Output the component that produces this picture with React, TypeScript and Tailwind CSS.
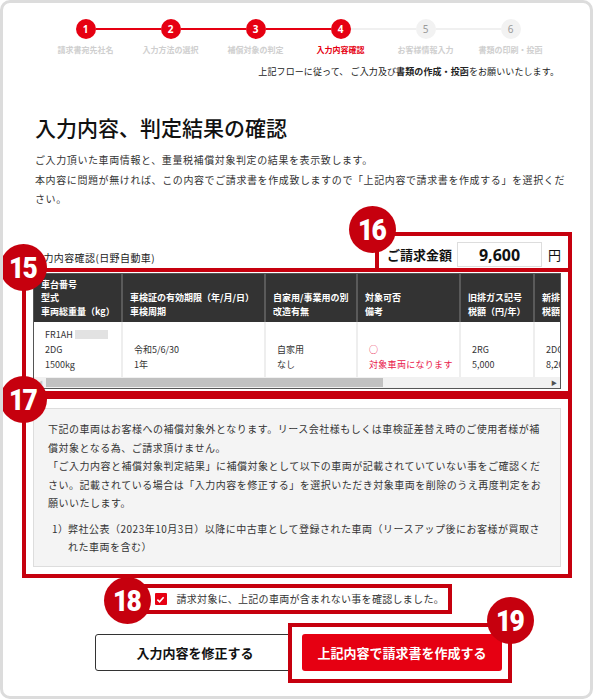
import React from "react";

function Badge({ n, pos }: { n: string; pos: string }) {
  return (
    <div
      className={
        "absolute z-20 w-[47px] h-[47px] rounded-full bg-[#c6000e] flex items-center justify-center " +
        pos
      }
    >
      <span className="text-white font-['Roboto',sans-serif] font-black text-[30px] leading-none tracking-[-2px] scale-x-[0.88] pr-[2px]">
        {n}
      </span>
    </div>
  );
}

const steps = [
  "請求書宛先社名",
  "入力方法の選択",
  "補償対象の判定",
  "入力内容確認",
  "お客様情報入力",
  "書類の印刷・投函",
];

type Col = { w: string; head: string[]; body: React.ReactNode[]; red?: boolean };

const cols: Col[] = [
  {
    w: "w-[89px]",
    head: ["車台番号", "型式", "車両総重量（kg）"],
    body: [
      <span className="flex items-center">
        FR1AH<span className="inline-block ml-[2px] w-[33px] h-[9px] bg-[#e2e2e2]" />
      </span>,
      "2DG",
      "1500kg",
    ],
  },
  { w: "w-[143px]", head: ["車検証の有効期限（年/月/日）", "車検周期"], body: ["令和5/6/30", "1年"] },
  { w: "w-[92px]", head: ["自家用/事業用の別", "改造有無"], body: ["自家用", "なし"] },
  { w: "w-[103px]", head: ["対象可否", "備考"], body: ["○", "対象車両になります"], red: true },
  { w: "w-[74px]", head: ["旧排ガス記号", "税額（円/年）"], body: ["2RG", "5,000"] },
  { w: "w-[100px]", head: ["新排ガス記号", "税額（円/年）"], body: ["2DG", "8,200"] },
];

export default function App() {
  return (
    <div className="w-[593px] h-[699px] bg-white border-[3px] border-[#dcdcdc] rounded-[10px] overflow-hidden font-['Noto_Sans_CJK_JP','Noto_Sans',sans-serif] text-[#333]">
      {/* steps */}
      <div className="pt-[16px] pl-[40px] flex">
        {steps.map((label, i) => (
          <div key={i} className="w-[85px] flex flex-col items-center">
            <div className="w-full flex items-center h-[20px]">
              <div
                className={
                  "flex-1 h-[2px] " +
                  (i === 0 ? "bg-transparent" : i <= 3 ? "bg-[#e60012]" : "bg-[#f0f0f0]")
                }
              />
              <div
                className={
                  "w-[20px] h-[20px] rounded-full flex items-center justify-center text-[10px] leading-none font-['Noto_Sans',sans-serif] " +
                  (i <= 3 ? "bg-[#e60012] text-white font-bold" : "bg-[#f2f2f2] text-[#9a9a9a]")
                }
              >
                {i + 1}
              </div>
              <div
                className={
                  "flex-1 h-[2px] " +
                  (i === 5 ? "bg-transparent" : i < 3 ? "bg-[#e60012]" : "bg-[#f0f0f0]")
                }
              />
            </div>
            <div
              className={
                "mt-[6px] text-[8px] leading-[10px] whitespace-nowrap font-bold " +
                (i === 3 ? "text-[#e60012]" : "text-[#cfcfcf]")
              }
            >
              {label}
            </div>
          </div>
        ))}
      </div>
      <p className="mt-[11px] pr-[31px] text-right text-[9px] leading-[12px] tracking-[0.1px] text-[#222]">
        上記フローに従って、 ご入力及び<b className="font-bold">書類の作成・投函</b>をお願いいたします。
      </p>

      <div className="pl-[32px] pr-[22px]">
        <h1 className="mt-[35px] text-[21px] leading-[28px] font-medium text-[#111]">
          入力内容、判定結果の確認
        </h1>
        <p className="mt-[9px] text-[10px] leading-[19.5px] tracking-[0.6px] text-[#333]">
          ご入力頂いた車両情報と、重量税補償対象判定の結果を表示致します。
          <br />
          本内容に問題が無ければ、この内容でご請求書を作成致しますので「上記内容で請求書を作成する」を選択くだ
          <br />
          さい。
        </p>
      </div>

      {/* annotated region */}
      <div className="ml-[19px] w-[550px] mt-[23.5px]">
        <div className="flex justify-between items-end">
          <div className="pl-[11px] pb-[3px] text-[10px] leading-[14px] tracking-[0.4px] text-[#222]">
            入力内容確認(日野自動車)
          </div>
          <div className="relative w-[197px] h-[36px] border-[4px] border-b-0 border-[#c6000e] flex items-center pt-[5px]">
            <Badge n="16" pos="left-[-30px] top-[-30px]" />
            <span className="pl-[8px] text-[13px] leading-[18px] font-bold text-[#111]">ご請求金額</span>
            <div className="ml-[5px] w-[85px] h-[25px] border border-[#dddddd] bg-white flex items-center justify-center font-['Noto_Sans',sans-serif] font-bold text-[16px] text-[#111]">
              9,600
            </div>
            <span className="ml-[6px] text-[13px] leading-[18px] text-[#111]">円</span>
          </div>
        </div>

        {/* box 15 */}
        <div className="relative border-[4px] border-[#c6000e] pt-[1px] pb-[2px] px-[7px]">
          <Badge n="15" pos="left-[-26px] top-[-28px]" />
          <div className="w-[528px] border border-[#555] overflow-hidden">
            <div className="flex w-[601px]">
              {cols.map((c, ci) => (
                <div key={ci} className={"flex flex-col shrink-0 " + c.w}>
                  <div className="h-[48px] bg-[#333333] border-r-[2px] border-[#5a5a5a] flex flex-col justify-end pl-[7px] pb-[4px]">
                    {c.head.map((h, hi) => (
                      <div key={hi} className="text-[9px] leading-[13.5px] font-bold text-white whitespace-nowrap">
                        {h}
                      </div>
                    ))}
                  </div>
                  <div className="h-[55px] bg-white border-r-[2px] border-[#eeeeee] flex flex-col justify-end pl-[11px] pb-[5px]">
                    {c.body.map((b, bi) => (
                      <div
                        key={bi}
                        className={
                          "text-[9px] leading-[15px] whitespace-nowrap " +
                          (c.red ? "text-[#e8174a] tracking-[0.3px]" : "text-[#333]")
                        }
                      >
                        {b}
                      </div>
                    ))}
                  </div>
                </div>
              ))}
            </div>
            <div className="h-[11px] bg-[#f1f1f1] flex items-center">
              <div className="w-[12px] h-full flex items-center justify-center text-[6px] text-[#c8c8c8] leading-none">◀</div>
              <div className="w-[337px] h-[9px] bg-[#c1c1c1]" />
              <div className="flex-1" />
              <div className="w-[12px] h-full flex items-center justify-center text-[6px] text-[#505050] leading-none">▶</div>
            </div>
          </div>
        </div>

        {/* box 17 */}
        <div className="relative border-[4px] border-[#c6000e] pt-[9px] pb-[7px] px-[7px]">
          <Badge n="17" pos="left-[-26px] top-[-23px]" />
          <div className="h-[159px] bg-[#f4f4f4] border border-[#dddddd] px-[14px] pt-[11px] text-[10px] leading-[18.5px] tracking-[0.5px] text-[#333]">
            <p>
              下記の車両はお客様への補償対象外となります。リース会社様もしくは車検証差替え時のご使用者様が補償対象となる為、ご請求頂けません。
              <br />
              「ご入力内容と補償対象判定結果」に補償対象として以下の車両が記載されていていない事をご確認ください。記載されている場合は「入力内容を修正する」を選択いただき対象車両を削除のうえ再度判定をお願いいたします。
            </p>
            <div className="mt-[7px] flex">
              <span className="w-[20px] shrink-0 pl-[4px]">1）</span>
              <span>
                弊社公表（2023年10月3日）以降に中古車として登録された車両（リースアップ後にお客様が買取さ
                <br />
                れた車両を含む）
              </span>
            </div>
          </div>
        </div>
      </div>

      {/* box 18 */}
      <div className="mt-[6px] flex justify-center">
        <div className="relative w-[310px] h-[30px] border-[4px] border-[#c6000e] flex items-center pl-[9px]">
          <Badge n="18" pos="left-[-42px] top-[-11px]" />
          <div className="w-[12px] h-[12px] bg-[#e60012] rounded-[1px] flex items-center justify-center shrink-0">
            <svg width="9" height="9" viewBox="0 0 10 10">
              <polyline points="1.5,5.2 4,7.5 8.5,2.5" fill="none" stroke="white" strokeWidth="1.8" />
            </svg>
          </div>
          <span className="ml-[10px] text-[10px] leading-[14px] tracking-[0.3px] text-[#333] whitespace-nowrap">
            請求対象に、上記の車両が含まれない事を確認しました。
          </span>
        </div>
      </div>

      {/* buttons */}
      <div className="mt-[20px] ml-[92px] flex gap-[7px]">
        <button className="w-[200px] h-[37px] border-[1.5px] border-[#333] rounded-[3px] bg-white text-[13px] font-bold text-[#111]">
          入力内容を修正する
        </button>
        <div className="relative w-[200px] h-[37px]">
          <div className="absolute left-[-14px] top-[-11px] right-[-10px] bottom-[-12px] border-[4px] border-[#c6000e] bg-white" />
          <button className="relative z-10 w-full h-full rounded-[3px] bg-[#e60012] text-[13px] font-bold text-white">
            上記内容で請求書を作成する
          </button>
          <Badge n="19" pos="left-[185px] top-[-37px]" />
        </div>
      </div>
    </div>
  );
}
